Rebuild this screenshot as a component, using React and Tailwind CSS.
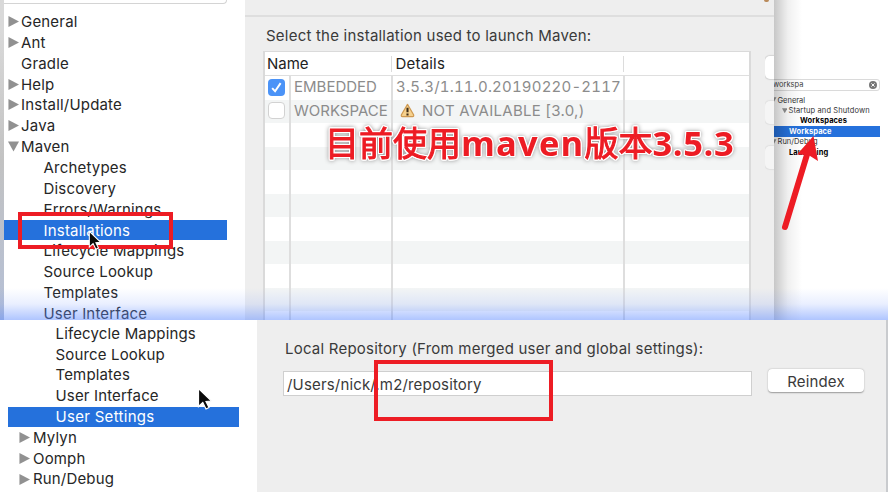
import React from 'react';

function Arrow({ open, className = '' }) {
  return (
    <svg viewBox="0 0 12 12" className={'shrink-0 fill-[#919191] ' + className}>
      {open ? <path d="M0 .5H12L6 11.500Z" /> : <path d="M.5 0L12 6 .5 12Z" />}
    </svg>
  );
}

function Cursor({ className }) {
  return (
    <svg viewBox="0 0 16 24" className={className}>
      <path d="M1.500 1.500V19.500L5.800 15.500 9 22 12 20.500 9 14.500 14.500 14Z" fill="#0a0a0a" stroke="#fff" strokeWidth="1.200" />
    </svg>
  );
}

const topTree = [
  ['General', 'closed'],
  ['Ant', 'closed'],
  ['Gradle', ''],
  ['Help', 'closed'],
  ['Install/Update', 'closed'],
  ['Java', 'closed'],
  ['Maven', 'open'],
];
const mavenTree = ['Archetypes', 'Discovery', 'Errors/Warnings', 'Installations', 'Lifecycle Mappings', 'Source Lookup', 'Templates', 'User Interface'];
const lowerTree = ['Lifecycle Mappings', 'Source Lookup', 'Templates', 'User Interface', 'User Settings'];

function PreferenceTree() {
  return (
    <div className="w-[241px] shrink-0 bg-white text-[15px] leading-[12px] tracking-[0.190px] text-[#262626]">
      <div className="h-[4px] w-[223px] rounded-br-[5px] border-b border-r border-[#d4d4d4]" />
      <div className="pt-[7px]">
        {topTree.map(([name, state]) => (
          <div key={name} className="flex h-[20.860px] items-center pl-[3.500px]">
            <div className="w-[13.500px]">{state && <Arrow open={state === 'open'} className="size-[11px]" />}</div>
            <span className="pt-px">{name}</span>
          </div>
        ))}
        {mavenTree.map((name) => (
          <div key={name} className="flex h-[20.860px] items-center whitespace-nowrap">
            <span className={'flex h-[19.500px] w-[223px] items-center pl-[39.500px] pt-px ' + (name === 'Installations' ? 'bg-[#2571dc] text-white' : '')}>{name}</span>
          </div>
        ))}
      </div>
    </div>
  );
}

function Row({ name, details, checked, warn, shade }) {
  return (
    <div className={'flex h-[23.500px] shrink-0 items-center text-[15px] text-[#8c8c8c] ' + (shade ? 'bg-[#f3f5f5]' : 'bg-white')}>
      <div className="flex h-full w-[26px] shrink-0 items-center border-r-2 border-[#dedede] pl-[3px]">
        {name && (
          <div className={'mb-px flex size-[17px] items-center justify-center rounded-[4px] ' + (checked ? 'bg-[#4b93f7]' : 'border border-[#d2d2d2] bg-white')}>
            {checked && (
              <svg viewBox="0 0 12 12" className="size-[13px] fill-none stroke-white stroke-[1.800]">
                <path d="M2 6.500L4.700 9.500 9.800 2" />
              </svg>
            )}
          </div>
        )}
      </div>
      <div className="flex h-full w-[102px] shrink-0 items-center whitespace-nowrap border-r-2 border-[#dedede] pb-px pl-[3px]">{name}</div>
      <div className="flex h-full w-[232px] shrink-0 items-center whitespace-nowrap border-r-2 border-[#dedede] pb-px pl-[3px]">
        {warn && (
          <svg viewBox="0 0 16 16" className="ml-[4px] mr-[7px] size-[15px]">
            <path d="M8 1.500L14.500 12.500Q15 14.500 13.500 14.500H2.500Q1 14.500 1.500 12.500Z" fill="#f6d18d" stroke="#cf9a52" strokeWidth="1.300" strokeLinejoin="round" />
            <path d="M8 5V9.800M8 11.200V13.200" stroke="#3d2c18" strokeWidth="2.200" />
          </svg>
        )}
        <span className={warn ? 'tracking-[0.280px]' : 'tracking-[0.190px] [font-feature-settings:"tnum"]'}>{details}</span>
      </div>
    </div>
  );
}

function Installations() {
  return (
    <div className="relative flex w-[529px] shrink-0 flex-col bg-[#eee]">
      <div className="h-[17px] shrink-0 border-b-2 border-[#dedede]" />
      <div className="flex h-[34px] shrink-0 items-center pl-[21px] pt-[4px] text-[15px] tracking-[0.220px] text-[#3a3a3a]">Select the installation used to launch Maven:</div>
      <div className="flex">
        <div className="ml-[18px] flex h-[269px] w-[488px] flex-col overflow-hidden border-l-2 border-r-2 border-t border-[#dadada] bg-white">
          <div className="flex h-[24px] shrink-0 items-center border-b border-[#dfdfdf] text-[15px] text-[#222]">
            <div className="h-[16px] w-[127px] border-r border-[#dcdcdc] pl-[2px] leading-[16px]">Name</div>
            <div className="h-[16px] w-[232px] border-r border-[#dcdcdc] pl-[3.500px] leading-[16px] tracking-[0.200px]">Details</div>
          </div>
          <Row name="EMBEDDED" details="3.5.3/1.11.0.20190220-2117" checked />
          <Row name="WORKSPACE" details="NOT AVAILABLE [3.0,)" warn shade />
          {[0, 1, 2, 3, 4, 5, 6, 7, 8].map((i) => (
            <Row key={i} shade={i % 2 === 1} />
          ))}
        </div>
        <div className="ml-auto flex w-[9px] flex-col gap-[22px] overflow-hidden pt-[5px]">
          <div className="h-[23px] w-[30px] rounded-[5px] bg-white shadow-[0_0_1px_1px_#d4d4d4]" />
          <div className="h-[23px] w-[30px] rounded-[5px] bg-[#f5f5f5] shadow-[0_0_1px_1px_#e0e0e0]" />
          <div className="h-[23px] w-[30px] rounded-[5px] bg-[#f5f5f5] shadow-[0_0_1px_1px_#e0e0e0]" />
        </div>
      </div>
      <div className="absolute right-[5px] top-0 h-[2px] w-[5px] rounded-b bg-[#b98a5a]" />
    </div>
  );
}

function WorkspaceSearch() {
  return (
    <div className="relative min-w-0 flex-1 overflow-hidden bg-white pt-[79px] text-[7.500px] text-[#333]">
      <div className="-ml-[3px] flex h-[12px] w-[109px] items-center justify-between rounded-[3px] border border-[#dadada] pl-px pr-[2px]">
        <span className="text-[7.500px] text-[#444]">workspa</span>
        <svg viewBox="0 0 10 10" className="size-[8px]">
          <circle cx="5" cy="5" r="5" fill="#777" />
          <path d="M3 3L7 7M7 3L3 7" stroke="#fff" strokeWidth="1.200" />
        </svg>
      </div>
      <div className="whitespace-nowrap pt-[4px]">
        <div className="-ml-[3px] flex h-[10.400px] items-center"><Arrow open className="mr-[1px] size-[5.500px]" />General</div>
        <div className="flex h-[10.400px] items-center pl-[7.500px] tracking-[0.120px]"><Arrow open className="mr-[1.500px] size-[5.500px]" />Startup and Shutdown</div>
        <div className="flex h-[10.400px] items-center pl-[26px] font-bold tracking-[0.100px] text-black">Workspaces</div>
        <div className="mr-[8px] flex h-[10.400px] items-center bg-[#2571dc] pl-[15px] font-bold tracking-[0.100px] text-white">Workspace</div>
        <div className="-ml-[3px] flex h-[10.400px] items-center tracking-[0.050px]"><Arrow open className="mr-[1px] size-[5.500px]" />Run/Debug</div>
        <div className="flex h-[10.400px] items-center pl-[15px] font-bold tracking-[0.100px] text-black">Launching</div>
      </div>
      <div className="absolute inset-y-0 left-0 w-[28px] bg-linear-to-r from-black/22 via-black/6 to-transparent" />
    </div>
  );
}

function UserSettings() {
  return (
    <div className="flex h-[172px]">
      <div className="w-[257px] shrink-0 bg-white pt-[3px] text-[15px] tracking-[0.160px] text-[#262626]">
        {lowerTree.map((name) => (
          <div key={name} className="flex h-[20.860px] items-center pl-[8px]">
            <span className={'flex h-[19.500px] w-[231px] items-center pl-[47.500px] pt-px ' + (name === 'User Settings' ? 'bg-[#2571dc] tracking-[0.300px] text-white' : '')}>{name}</span>
          </div>
        ))}
        {['Mylyn', 'Oomph', 'Run/Debug'].map((name) => (
          <div key={name} className="flex h-[20.860px] items-center pl-[19px]">
            <Arrow className="mr-[3px] size-[11px]" />
            <span className="pt-[0.500px]">{name}</span>
          </div>
        ))}
      </div>
      <div className="min-w-0 flex-1 border-r-2 border-[#c9cbce] bg-[#eee] pl-[26px] pt-[18px] text-[15px] text-[#3a3a3a]">
        <div className="flex h-[22px] items-center pl-[2px] tracking-[0.220px]">Local Repository (From merged user and global settings):</div>
        <div className="flex items-start pt-[9px]">
          <div className="mt-[2px] flex h-[25px] w-[469px] items-center border border-[#cfcfcf] bg-white pl-[3px] pt-[3px] tracking-[0.170px]">/Users/nick/.m2/repository</div>
          <div className="ml-[16px] flex h-[23px] w-[96px] items-center justify-center rounded-[4px] bg-white pt-[3px] tracking-[0.150px] shadow-[0_0.500px_1.500px_#999]">Reindex</div>
        </div>
      </div>
    </div>
  );
}

export default function App() {
  return (
    <div className="relative h-[492px] w-[888px] overflow-hidden bg-white font-['Inter','Liberation_Sans',sans-serif]">
      <div className="relative flex h-[320px] overflow-hidden">
        <div className="w-[4px] shrink-0 bg-linear-to-b from-[#d9d9d9] from-10% via-[#c2c2c2] to-[#b4bfd6]" />
        <PreferenceTree />
        <Installations />
        <WorkspaceSearch />
        <div className="absolute inset-x-0 bottom-0 h-[32px] bg-linear-to-b from-transparent via-[#6f94ff]/15 to-[#5f8bff]/50" />
      </div>
      <UserSettings />
      <div className="absolute left-[18px] top-[212px] h-[37px] w-[155px] border-4 border-[#ed1c24]" />
      <div className="absolute left-[374px] top-[360px] h-[61px] w-[179px] border-4 border-[#ed1c24]" />
      <Cursor className="absolute left-[88px] top-[230px] h-[21px] w-[14px]" />
      <Cursor className="absolute left-[197px] top-[387px] h-[24px] w-[16px]" />
      <div className="absolute left-[325px] top-[120px] flex items-baseline whitespace-nowrap font-['Open_Sans','Noto_Sans_CJK_SC',sans-serif] text-[34.500px] font-bold leading-[46px] text-[#ed1c24] [filter:drop-shadow(1px_0_0_white)_drop-shadow(-1px_0_0_white)_drop-shadow(0_1px_0_white)_drop-shadow(0_-1px_0_white)_drop-shadow(0_0_2px_#999)]">
        <span className="text-[34px] font-normal [-webkit-text-stroke:1px_#ed1c24]">目前使用</span>
        <span className="tracking-[1.200px]">maven</span>
        <span className="text-[34px] font-normal [-webkit-text-stroke:1px_#ed1c24]">版本</span>
        <span className="tracking-[0.600px]">3.5.3</span>
      </div>
      <svg viewBox="0 0 50 100" className="absolute left-[775px] top-[134px] h-[100px] w-[50px]">
        <path d="M10 93L32.500 19" stroke="#ed1c24" strokeWidth="6" strokeLinecap="round" />
        <path d="M38.500 2L43 27 33.500 21 22 20.500Z" fill="#ed1c24" />
      </svg>
    </div>
  );
}
